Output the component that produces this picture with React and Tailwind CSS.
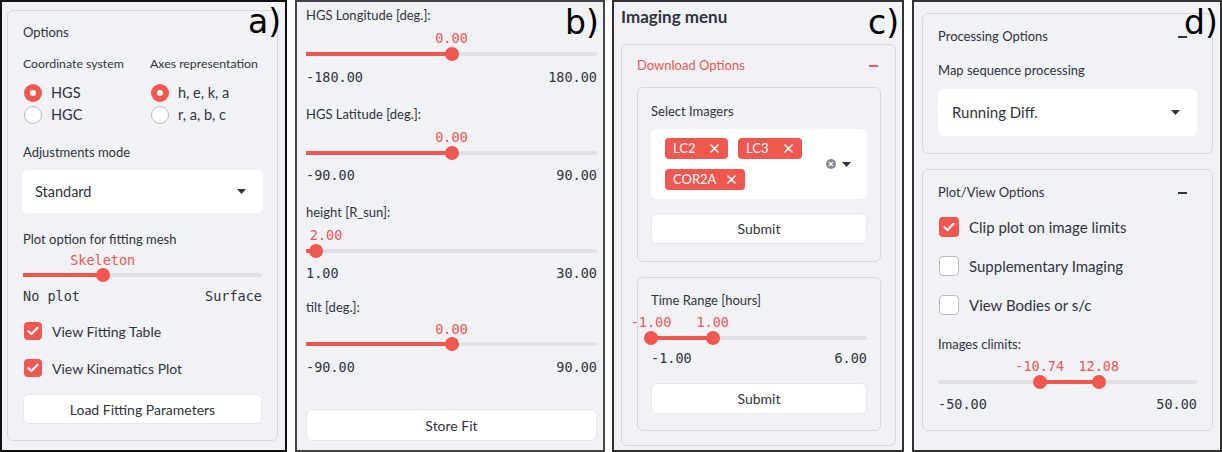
import React from "react";

const SANS = { fontFamily: "Lato, 'Noto Sans', sans-serif" };

function Caret() {
  return (
    <svg width="9" height="5" viewBox="0 0 9 5" className="shrink-0">
      <path d="M0 0 L9 0 L4.5 5 Z" fill="#31333f" />
    </svg>
  );
}

function Radio({ checked, label }) {
  return (
    <div className="flex items-center h-[18px] gap-[9px]">
      {checked ? (
        <div className="w-[18px] h-[18px] ml-[1px] rounded-full bg-[#f0574f] flex items-center justify-center">
          <div className="w-[6px] h-[6px] rounded-full bg-white" />
        </div>
      ) : (
        <div className="w-[18px] h-[18px] ml-[1px] rounded-full bg-white border border-[#b9bbc1]" />
      )}
      <span className="text-[14.5px] text-[#31333f] whitespace-nowrap">{label}</span>
    </div>
  );
}

function Checkbox({ checked, label, size = 18, textClass = "text-[14px]" }) {
  const box = size === 18 ? "w-[18px] h-[18px]" : "w-[20px] h-[20px]";
  return (
    <div className="flex items-center gap-[10px]">
      {checked ? (
        <div className={`${box} ml-[1px] rounded-[4px] bg-[#f0574f] flex items-center justify-center`}>
          <svg width="12" height="10" viewBox="0 0 12 10">
            <path d="M1.5 5.2 L4.5 8 L10.5 1.8" fill="none" stroke="white" strokeWidth="2.2" strokeLinecap="round" strokeLinejoin="round" />
          </svg>
        </div>
      ) : (
        <div className={`${box} ml-[1px] rounded-[4px] bg-white border border-[#b9bbc1]`} />
      )}
      <span className={`${textClass} text-[#31333f] whitespace-nowrap`}>{label}</span>
    </div>
  );
}

function Slider({ min, max, vals, labels, range = false, labelOffsets = [], valuesClass = "", trackClass = "" }) {
  const pct = (v) => ((v - min) / (max - min)) * 100;
  const ps = vals.map(pct);
  const fillFrom = range ? ps[0] : 0;
  const fillTo = range ? ps[1] : ps[0];
  return (
    <div>
      <div className={`relative h-[16px] ${valuesClass}`}>
        {labels.map((l, i) => (
          <span
            key={i}
            className="absolute top-0 -translate-x-1/2 text-[13.5px] leading-[16px] text-[#f0574f] whitespace-nowrap"
            style={{ left: `calc(${ps[i]}% + ${labelOffsets[i] || 0}px)`, fontFamily: "'DejaVu Sans Mono', monospace" }}
          >
            {l}
          </span>
        ))}
      </div>
      <div className={`relative h-[12px] ${trackClass}`}>
        <div className="absolute left-0 right-0 top-[4px] h-[4px] rounded-full bg-[#dfe1e7]" />
        <div
          className="absolute top-[4px] h-[4px] bg-[#f0574f]"
          style={{ left: `${fillFrom}%`, width: `${fillTo - fillFrom}%` }}
        />
        {ps.map((p, i) => (
          <div
            key={i}
            className="absolute -top-[1px] w-[14px] h-[14px] -translate-x-1/2 rounded-full bg-[#f0574f]"
            style={{ left: `${p}%` }}
          />
        ))}
      </div>
    </div>
  );
}

function Ticks({ left, right, className = "" }) {
  return (
    <div
      className={`flex justify-between h-[16px] items-center text-[13.5px] text-[#31333f] ${className}`}
      style={{ fontFamily: "'DejaVu Sans Mono', monospace" }}
    >
      <span>{left}</span>
      <span>{right}</span>
    </div>
  );
}

function Label({ children, className = "", size = "text-[13px]" }) {
  return <div className={`h-[20px] flex items-center ${size} text-[#31333f] whitespace-nowrap ${className}`}>{children}</div>;
}

function Button({ children, className = "" }) {
  return (
    <div className={`bg-white rounded-[6px] border border-[#e6e7ea] flex items-center justify-center text-[14px] text-[#31333f] ${className}`}>
      {children}
    </div>
  );
}

function PanelTag({ children, className = "" }) {
  return (
    <div
      className={`absolute text-[33px] leading-none text-black ${className}`}
      style={{ fontFamily: "'DejaVu Sans', sans-serif" }}
    >
      {children}
    </div>
  );
}

function Tag({ label, w }) {
  return (
    <div className={`h-[21px] ${w} rounded-[4px] bg-[#f0574f] flex items-center justify-between pl-[8px] pr-[9px] text-white text-[13px]`}>
      <span>{label}</span>
      <svg width="9" height="9" viewBox="0 0 9 9">
        <path d="M1 1 L8 8 M8 1 L1 8" stroke="white" strokeWidth="1.6" strokeLinecap="round" />
      </svg>
    </div>
  );
}

function Minus({ color }) {
  return <div className={`w-[9px] h-[1.5px] ${color}`} />;
}

export default function App() {
  return (
    <div className="w-[1222px] h-[452px] bg-white flex overflow-hidden" style={SANS}>
      {/* Panel a */}
      <div className="relative w-[287px] h-[452px] shrink-0 border-2 border-[#111] bg-[#f0f2f6] pl-[5px] pt-[8px]">
        <div className="w-[271px] h-[431px] border border-[#d6d8dd] rounded-[6px] px-[15px] pt-[12px]">
          <Label>Options</Label>
          <div className="flex mt-[11px]">
            <div className="w-[127px] shrink-0">
              <Label size="text-[12.3px]">Coordinate system</Label>
              <div className="mt-[10px]"><Radio checked label="HGS" /></div>
              <div className="mt-[4px]"><Radio label="HGC" /></div>
            </div>
            <div>
              <Label size="text-[12.3px]">Axes representation</Label>
              <div className="mt-[10px]"><Radio checked label="h, e, k, a" /></div>
              <div className="mt-[4px]"><Radio label="r, a, b, c" /></div>
            </div>
          </div>
          <Label className="mt-[19px]">Adjustments mode</Label>
          <div className="mt-[7px] h-[43px] -mx-[1px] bg-white rounded-[6px] flex items-center justify-between pl-[13px] pr-[17px]">
            <span className="text-[14.5px] text-[#31333f]">Standard</span>
            <Caret />
          </div>
          <Label className="mt-[17px]">Plot option for fitting mesh</Label>
          <Slider min={0} max={3} vals={[1]} labels={["Skeleton"]} valuesClass="mt-[2px]" trackClass="mt-[1px]" />
          <Ticks left="No plot" right="Surface" className="mt-[7px]" />
          <div className="mt-[18px] h-[18px] flex items-center"><Checkbox checked label="View Fitting Table" /></div>
          <div className="mt-[19px] h-[18px] flex items-center"><Checkbox checked label="View Kinematics Plot" /></div>
          <Button className="mt-[17px] h-[30px]">Load Fitting Parameters</Button>
        </div>
        <PanelTag className="left-[246px] top-[3px]">a)</PanelTag>
      </div>

      {/* Panel b */}
      <div className="relative ml-[8px] w-[310px] h-[452px] shrink-0 border-2 border-[#444] bg-[#f0f2f6] pl-[9px] pr-[6px] pt-[4px]">
        <Label>HGS Longitude [deg.]:</Label>
        <Slider min={-180} max={180} vals={[0]} labels={["0.00"]} valuesClass="mt-[4px]" trackClass="mt-[2px]" />
        <Ticks left="-180.00" right="180.00" className="mt-[9px]" />
        <Label className="mt-[20px]">HGS Latitude [deg.]:</Label>
        <Slider min={-90} max={90} vals={[0]} labels={["0.00"]} valuesClass="mt-[4px]" trackClass="mt-[2px]" />
        <Ticks left="-90.00" right="90.00" className="mt-[8px]" />
        <Label className="mt-[20px]">height [R_sun]:</Label>
        <Slider min={1} max={30} vals={[2]} labels={["2.00"]} labelOffsets={[10]} valuesClass="mt-[4px]" trackClass="mt-[2px]" />
        <Ticks left="1.00" right="30.00" className="mt-[8px]" />
        <Label className="mt-[17px]">tilt [deg.]:</Label>
        <Slider min={-90} max={90} vals={[0]} labels={["0.00"]} valuesClass="mt-[3px]" trackClass="mt-[1px]" />
        <Ticks left="-90.00" right="90.00" className="mt-[9px]" />
        <Button className="mt-[34px] h-[32px]">Store Fit</Button>
        <PanelTag className="left-[268px] top-[4px]">b)</PanelTag>
      </div>

      {/* Panel c */}
      <div className="relative ml-[7px] w-[292px] h-[452px] shrink-0 border-2 border-[#333] bg-[#f0f2f6] pl-[7px] pr-[6px] pt-[2px]">
        <div className="mt-[2px] h-[22px] flex items-center text-[17px] font-bold text-[#31333f]">Imaging menu</div>
        <div className="mt-[16px] w-[275px] h-[402px] border border-[#d6d8dd] rounded-[6px] pl-[15px] pr-[14px] pt-[11px]">
          <div className="h-[20px] flex items-center justify-between pr-[3px]">
            <span className="text-[13px] text-[#f0574f]">Download Options</span>
            <Minus color="bg-[#f0574f]" />
          </div>
          <div className="mt-[11px] h-[175px] border border-[#d6d8dd] rounded-[6px] px-[13px] pt-[14px]">
            <Label>Select Imagers</Label>
            <div className="mt-[7px] h-[70px] bg-white rounded-[6px] flex items-center justify-between pl-[14px] pr-[16px]">
              <div className="w-[150px] flex flex-wrap gap-x-[10px] gap-y-[10px]">
                <Tag label="LC2" w="w-[63px]" />
                <Tag label="LC3" w="w-[64px]" />
                <Tag label="COR2A" w="w-[80px]" />
              </div>
              <div className="flex items-center gap-[6px]">
                <svg width="10" height="10" viewBox="0 0 10 10">
                  <circle cx="5" cy="5" r="5" fill="#8b8d94" />
                  <path d="M3.2 3.2 L6.8 6.8 M6.8 3.2 L3.2 6.8" stroke="white" strokeWidth="1.2" />
                </svg>
                <Caret />
              </div>
            </div>
            <Button className="mt-[14px] h-[31px]">Submit</Button>
          </div>
          <div className="mt-[15px] h-[154px] border border-[#d6d8dd] rounded-[6px] px-[13px] pt-[13px]">
            <Label>Time Range [hours]</Label>
            <Slider min={-1} max={6} vals={[-1, 1]} labels={["-1.00", "1.00"]} range valuesClass="mt-[3px]" trackClass="mt-[2px]" />
            <Ticks left="-1.00" right="6.00" className="mt-[6px]" />
            <Button className="mt-[17px] h-[31px]">Submit</Button>
          </div>
        </div>
        <PanelTag className="left-[254px] top-[4px]">c)</PanelTag>
      </div>

      {/* Panel d */}
      <div className="relative ml-[8px] w-[310px] h-[452px] shrink-0 border-2 border-[#333] bg-[#f0f2f6] pl-[8px] pt-[11px]">
        <div className="w-[291px] h-[141px] border border-[#d6d8dd] rounded-[6px] px-[15px] pt-[13px]">
          <div className="h-[20px] flex items-center justify-between pr-[10px]">
            <span className="text-[13px] text-[#31333f]">Processing Options</span>
            <Minus color="bg-[#31333f]" />
          </div>
          <Label className="mt-[14px]">Map sequence processing</Label>
          <div className="mt-[8px] h-[47px] bg-white rounded-[6px] flex items-center justify-between pl-[14px] pr-[17px]">
            <span className="text-[15px] text-[#31333f]">Running Diff.</span>
            <Caret />
          </div>
        </div>
        <div className="mt-[15px] w-[291px] h-[262px] border border-[#d6d8dd] rounded-[6px] px-[15px] pt-[13px]">
          <div className="h-[20px] flex items-center justify-between pr-[10px]">
            <span className="text-[13px] text-[#31333f]">Plot/View Options</span>
            <Minus color="bg-[#31333f]" />
          </div>
          <div className="mt-[14px] h-[20px] flex items-center"><Checkbox checked size={20} textClass="text-[15px]" label="Clip plot on image limits" /></div>
          <div className="mt-[19px] h-[20px] flex items-center"><Checkbox size={20} textClass="text-[15px]" label="Supplementary Imaging" /></div>
          <div className="mt-[19px] h-[20px] flex items-center"><Checkbox size={20} textClass="text-[15px]" label="View Bodies or s/c" /></div>
          <Label className="mt-[20px]">Images climits:</Label>
          <Slider min={-50} max={50} vals={[-10.74, 12.08]} labels={["-10.74", "12.08"]} range valuesClass="mt-[3px]" trackClass="mt-[2px]" />
          <Ticks left="-50.00" right="50.00" className="mt-[8px]" />
        </div>
        <PanelTag className="left-[270px] top-[4px]">d)</PanelTag>
      </div>
    </div>
  );
}
